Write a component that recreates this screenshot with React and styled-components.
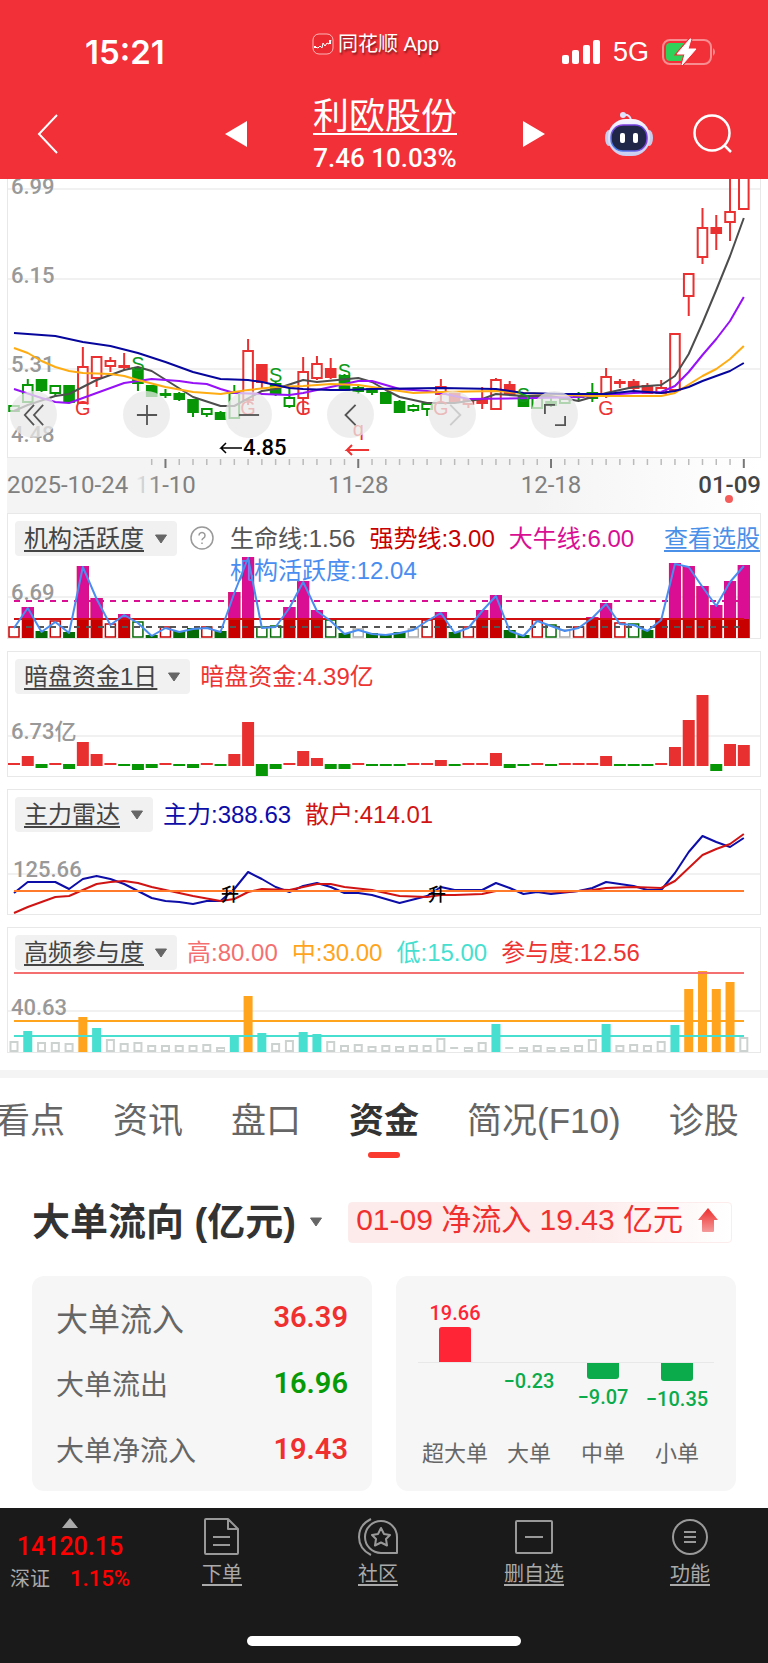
import React from 'react';
import styled, { createGlobalStyle } from 'styled-components';

const STEP = 13.77;
const xAt = (i) => 7 + STEP * i;

// [kind, high, top, bottom, low], upper case kind = filled body
const candles = [
    ['g', 227, 227, 232, 232], ['g', 200, 206, 223, 223], ['G', 200, 201, 211, 213], ['g', 206, 207, 214, 218],
    ['G', 207, 207, 223, 223], ['r', 168, 188, 224, 224], ['r', 178, 178, 199, 208], ['r', 178, 182, 187, 193],
    ['R', 174, 187, 188, 191], ['G', 188, 190, 204, 212], ['G', 207, 207, 217, 217], ['G', 210, 215, 216, 219],
    ['G', 213, 215, 220, 222], ['G', 221, 221, 233, 238], ['g', 230, 230, 235, 238], ['G', 232, 234, 240, 240],
    ['g', 206, 214, 239, 239], ['r', 160, 172, 221, 226], ['R', 186, 186, 203, 209], ['G', 203, 205, 215, 217],
    ['g', 208, 219, 227, 229], ['r', 178, 193, 219, 236], ['r', 177, 185, 199, 201], ['R', 179, 190, 198, 200],
    ['G', 195, 197, 211, 211], ['G', 207, 209, 212, 215], ['G', 210, 210, 213, 216], ['G', 214, 214, 224, 224],
    ['G', 221, 223, 233, 233], ['g', 225, 227, 231, 233], ['g', 225, 225, 230, 237], ['r', 200, 208, 215, 224],
    ['R', 215, 215, 223, 223], ['r', 221, 221, 225, 229], ['R', 208, 221, 224, 230], ['r', 199, 201, 230, 230],
    ['R', 202, 206, 215, 215], ['G', 218, 218, 227, 227], ['g', 218, 218, 229, 229], ['G', 219, 223, 226, 228],
    ['g', 220, 220, 224, 224], ['G', 213, 216, 218, 221], ['G', 204, 214, 219, 223], ['r', 189, 198, 215, 219],
    ['R', 200, 203, 204, 209], ['R', 200, 203, 209, 212], ['R', 204, 207, 214, 214], ['r', 201, 209, 214, 214],
    ['r', 155, 155, 211, 211], ['r', 95, 95, 117, 137], ['r', 29, 49, 78, 85], ['R', 36, 49, 54, 71],
    ['r', -12, 33, 43, 62], ['r', -12, -12, 30, 30],
];

// moving averages, [index, y] pairs
const averages = [
    { color: '#4d4d4d', points: [[0, 232], [1, 226], [3, 217], [4, 215], [6, 201], [8, 191], [9, 188], [10, 192], [13, 218], [15, 227], [16, 227], [18, 212], [19, 210], [21, 201], [22, 203], [25, 199], [26, 203], [27, 211], [28, 218], [30, 224], [32, 224], [34, 220], [35, 215], [37, 217], [39, 217], [41, 222], [43, 214], [45, 208], [47, 206], [48, 197], [49, 175], [50, 144], [51, 111], [52, 77], [53, 39]] },
    { color: '#9610f8', points: [[0, 210], [2, 219], [3, 223], [4, 224], [6, 214], [8, 204], [9, 202], [10, 200], [11, 201], [12, 202], [13, 204], [14, 205], [15, 210], [16, 214], [18, 215], [20, 216], [21, 214], [23, 208], [25, 202], [26, 202], [28, 210], [30, 212], [31, 214], [33, 220], [38, 219], [41, 218], [43, 216], [45, 214], [47, 213], [48, 207], [49, 193], [50, 176], [51, 160], [52, 142], [53, 118]] },
    { color: '#ffac12', points: [[0, 169], [1, 174], [2, 182], [3, 188], [4, 192], [5, 194], [7, 195], [8, 197], [9, 201], [11, 208], [13, 213], [15, 215], [17, 211], [19, 208], [21, 207], [23, 205], [25, 206], [27, 210], [29, 214], [31, 213], [35, 212], [37, 214], [42, 217], [47, 217], [48, 214], [50, 197], [51, 190], [52, 180], [53, 167]] },
    { color: '#06069c', points: [[0, 154], [1, 155], [3, 157], [5, 163], [7, 167], [9, 174], [11, 183], [13, 193], [15, 200], [17, 201], [18, 203], [19, 206], [20, 209], [21, 210], [23, 211], [24, 211], [26, 210], [31, 209], [35, 210], [37, 214], [40, 215], [43, 215], [45, 212], [47, 214], [48, 212], [49, 208], [50, 202], [51, 197], [52, 192], [53, 184]] },
];

// [mark, index, baseline]
const signals = [
    ['S', 9, 192], ['S', 19, 203], ['S', 24, 199], ['S', 37, 223],
    ['G', 5, 236], ['G', 17, 236], ['G', 21, 236], ['G', 31, 236], ['G', 43, 236], ['q', 25, 257],
];

const activity = [
    ['r', 11], ['M', 31], ['G', 7], ['r', 17], ['G', 6], ['M', 72], ['M', 40], ['r', 14], ['M', 24],
    ['g', 16], ['G', 3], ['r', 11], ['G', 7], ['G', 10], ['r', 11], ['G', 7], ['M', 46], ['M', 81],
    ['g', 11], ['g', 12], ['M', 31], ['M', 57], ['M', 28], ['g', 18], ['G', 5], ['n', 9], ['G', 5],
    ['G', 4], ['G', 6], ['n', 9], ['r', 18], ['M', 26], ['G', 6], ['r', 11], ['M', 28], ['M', 43],
    ['G', 8], ['G', 3], ['r', 18], ['g', 13], ['n', 8], ['r', 11], ['M', 21], ['M', 35], ['r', 15],
    ['g', 14], ['G', 8], ['M', 19], ['M', 75], ['M', 72], ['M', 52], ['M', 33], ['M', 57], ['M', 73],
];

const darkPool = [
    2, 10, -4, 3, -5, 24, 12, 2, -1, -6, -4, 2, -1, -4, 2, -1, 12, 44, -12, -5, 3, 15, 8, -5, -5, 2, -1,
    -1, -1, 2, 2, 6, -1, 2, 2, 13, -4, -1, 3, -1, 2, 2, 3, 10, -1, -1, -1, 3, 19, 46, 71, -7, 22, 21,
];

const mainForce = [[0, 104], [1, 93], [3, 93], [4, 100], [5, 90], [6, 87], [7, 90], [8, 95], [9, 102], [10, 109], [11, 112], [12, 113], [13, 115], [14, 112], [15, 112], [16, 100], [17, 83], [18, 90], [19, 98], [20, 103], [21, 97], [22, 94], [23, 98], [24, 104], [25, 104], [26, 106], [27, 110], [28, 114], [30, 107], [31, 98], [32, 101], [34, 101], [35, 94], [36, 99], [37, 105], [38, 103], [39, 105], [41, 102], [42, 99], [43, 93], [44, 95], [45, 97], [46, 101], [47, 101], [48, 84], [49, 63], [50, 47], [51, 53], [52, 58], [53, 49]];
const retail = [[0, 124], [1, 118], [2, 113], [3, 108], [4, 107], [5, 101], [6, 95], [7, 93], [8, 92], [9, 94], [10, 98], [12, 104], [13, 107], [15, 112], [16, 110], [17, 103], [18, 100], [20, 101], [22, 95], [23, 95], [24, 98], [26, 101], [27, 104], [28, 107], [30, 108], [31, 106], [32, 106], [34, 105], [35, 102], [38, 102], [40, 103], [42, 101], [43, 99], [45, 98], [47, 99], [48, 92], [49, 79], [50, 66], [51, 60], [52, 55], [53, 45]];

const participation = [
    10, 21, 9, 9, 8, 35, 24, 12, 8, 9, 6, 6, 6, 6, 7, 4, 17, 56, 19, 8, 11, 20, 18, 10, 6, 7, 5,
    6, 5, 6, 6, 13, 2, 4, 9, 28, 2, 4, 6, 4, 4, 6, 12, 28, 6, 7, 6, 10, 27, 63, 81, 63, 70, 14,
];

const tabs = ['看点', '资讯', '盘口', '资金', '简况(F10)', '诊股'];

const orders = [
    { label: '大单流入', value: '36.39', color: '#f02f2f', large: true },
    { label: '大单流出', value: '16.96', color: '#069a06' },
    { label: '大单净流入', value: '19.43', color: '#f02f2f' },
];

const flows = [
    { name: '超大单', value: 19.66 },
    { name: '大单', value: -0.23 },
    { name: '中单', value: -9.07 },
    { name: '小单', value: -10.35 },
];

const toLine = (points) => points.map(([i, y]) => `${xAt(i)},${y}`).join(' ');

function Caret() {
    return (
        <svg width="14" height="10" viewBox="0 0 14 10" aria-hidden="true">
            <path d="M1.5 1h11L7 9z" fill="#666" stroke="#666" strokeLinejoin="round" />
        </svg>
    );
}

function StatusBar() {
    return (
        <Status>
            <Clock>15:21</Clock>
            <AppMark>
                <svg width="22" height="22" viewBox="0 0 22 22" fill="none" stroke="#fff" aria-hidden="true">
                    <rect x="1" y="1" width="20" height="20" rx="6" fill="#ea2a30" strokeOpacity=".65" />
                    <path d="M3 14l3 1 2-2 2 2 1-5 2 3 2-3 2 1 2-4" />
                    <path d="M3 13v2M18 7v4" strokeWidth="2" />
                </svg>
                同花顺 App
            </AppMark>
            <Signals>
                <svg width="38" height="25" viewBox="0 0 38 25" fill="#fff" aria-hidden="true">
                    <rect y="15" width="7" height="9" rx="2" />
                    <rect x="10" y="10" width="7" height="14" rx="2" />
                    <rect x="21" y="5" width="7" height="19" rx="2" />
                    <rect x="31" width="7" height="24" rx="2" />
                </svg>
                5G
                <svg width="54" height="28" viewBox="0 0 54 28" aria-hidden="true">
                    <rect x="1" y="2" width="48" height="24" rx="7" fill="none" stroke="#fff" strokeOpacity=".45" strokeWidth="2" />
                    <path d="M51 10a5 5 0 0 1 0 8z" fill="#fff" fillOpacity=".45" />
                    <path d="M8 5h16v18H8a4 4 0 0 1-4-4V9a4 4 0 0 1 4-4z" fill="#30d158" />
                    <path d="M28 1L15 16h8l-3 11 14-16h-8l3-10z" fill="#fff" stroke="#f23038" strokeWidth="3" />
                    <path d="M28 1L15 16h8l-3 11 14-16h-8l3-10z" fill="#fff" stroke="#fff" strokeLinejoin="round" />
                </svg>
            </Signals>
        </Status>
    );
}

function StockNav() {
    return (
        <Nav>
            <IconButton aria-label="返回">
                <svg width="22" height="42" viewBox="0 0 22 42" fill="none" stroke="#fff" strokeWidth="2">
                    <path d="M20 2L2 21l18 19" />
                </svg>
            </IconButton>
            <Stepper>
                <IconButton aria-label="上一只">
                    <svg width="22" height="26" viewBox="0 0 22 26" fill="#fff"><path d="M0 13L22 0v26z" /></svg>
                </IconButton>
                <Stock>
                    <StockName href="#stock">利欧股份</StockName>
                    <Quote>7.46 10.03%</Quote>
                </Stock>
                <IconButton aria-label="下一只">
                    <svg width="22" height="26" viewBox="0 0 22 26" fill="#fff"><path d="M22 13L0 0v26z" /></svg>
                </IconButton>
            </Stepper>
            <NavTools>
                <IconButton aria-label="助手">
                    <svg width="48" height="44" viewBox="0 0 48 44">
                        <defs>
                            <linearGradient id="shell" x1="0" y1="0" x2="0" y2="1">
                                <stop offset="0" stopColor="#f6f4ff" />
                                <stop offset="1" stopColor="#c9cdf0" />
                            </linearGradient>
                            <linearGradient id="rim" x1="0" y1="1" x2="1" y2="0">
                                <stop offset="0" stopColor="#3d8bf0" />
                                <stop offset=".6" stopColor="#8a3fe0" />
                                <stop offset="1" stopColor="#5b3fd8" />
                            </linearGradient>
                        </defs>
                        <path d="M18 3c5-1 7 1 8 5" fill="none" stroke="#e4e0f8" strokeWidth="2" />
                        <circle cx="18" cy="3" r="3" fill="#dfe3fb" />
                        <ellipse cx="4" cy="26" rx="4" ry="8" fill="#c8cbe9" />
                        <ellipse cx="44" cy="26" rx="4" ry="8" fill="#c8cbe9" />
                        <rect x="3" y="7" width="42" height="37" rx="18" fill="url(#shell)" />
                        <rect x="6" y="13" width="36" height="26" rx="12" fill="#1f2648" stroke="url(#rim)" strokeWidth="1.5" />
                        <rect x="15" y="21" width="5" height="10" rx="2" fill="#fff" />
                        <rect x="28" y="21" width="5" height="10" rx="2" fill="#fff" />
                    </svg>
                </IconButton>
                <IconButton aria-label="搜索">
                    <svg width="40" height="40" viewBox="0 0 40 40" fill="none" stroke="#fff" strokeWidth="2.5">
                        <circle cx="19" cy="19" r="17.5" />
                        <path d="M31 31l7 7" />
                    </svg>
                </IconButton>
            </NavTools>
        </Nav>
    );
}

function Candle({ data, i }) {
    const [kind, high, top, bottom, low] = data;
    const color = kind.toLowerCase() === 'r' ? '#ea3030' : '#069606';
    const filled = kind !== kind.toLowerCase();
    const x = xAt(i);
    return (
        <g stroke={color} strokeWidth="2">
            <path d={`M${x} ${high}V${top}M${x} ${bottom}V${low}`} />
            <rect x={x - 4.8} y={top} width="9.6" height={bottom - top} fill={filled ? color : '#fff'} />
        </g>
    );
}

function KLine() {
    return (
        <KFrame>
            <Plot viewBox="1 0 752 278">
                {[10, 100, 190].map((y) => <GridLine key={y} x1="0" x2="754" y1={y} y2={y} />)}
                <AxisLabel x="4" y="15">6.99</AxisLabel>
                <AxisLabel x="4" y="104">6.15</AxisLabel>
                <AxisLabel x="4" y="193">5.31</AxisLabel>
                <AxisLabel x="4" y="263">4.48</AxisLabel>
                {candles.map((c, i) => <Candle key={i} data={c} i={i} />)}
                {averages.map((a) => <Line key={a.color} points={toLine(a.points)} stroke={a.color} />)}
                {signals.map(([mark, i, y]) => (
                    <SignalText key={mark + i} x={xAt(i)} y={y} fill={mark === 'S' ? '#0f9a1a' : '#ee3333'}>{mark}</SignalText>
                ))}
                <path d="M235 269h-21l5-5M214 269l5 5" fill="none" stroke="#000" strokeWidth="1.5" />
                <LowText x="236" y="276">4.85</LowText>
                <path d="M362 271h-22l5-5M340 271l5 5" fill="none" stroke="#ee3333" strokeWidth="2" />
            </Plot>
            <ChartTools>
                <RoundButton $first aria-label="最早"><svg viewBox="0 0 24 24"><path d="M12 1L2 12l10 11M22 1L12 12l10 11" /></svg></RoundButton>
                <RoundButton aria-label="放大"><svg viewBox="0 0 24 24"><path d="M1 12h22M12 1v22" /></svg></RoundButton>
                <RoundButton aria-label="缩小"><svg viewBox="0 0 24 24"><path d="M1 12h22" /></svg></RoundButton>
                <RoundButton aria-label="左移"><svg viewBox="0 0 24 24"><path d="M17 1L6 12l11 11" /></svg></RoundButton>
                <RoundButton $dim aria-label="右移"><svg viewBox="0 0 24 24"><path d="M9 1l11 11L9 23" /></svg></RoundButton>
                <RoundButton aria-label="全屏"><svg viewBox="0 0 24 24"><path d="M1 11V1h11M23 13v10H12" /></svg></RoundButton>
            </ChartTools>
        </KFrame>
    );
}

function DateAxis() {
    const ticks = candles.map((_, i) => i).filter((i) => i >= 10);
    const isMajor = (i) => [11, 25, 39, 53].includes(i);
    return (
        <Axis>
            <Plot viewBox="0 0 754 55">
                <defs>
                    <linearGradient id="fade">
                        <stop offset="0" stopColor="#f4f4f4" />
                        <stop offset=".85" stopColor="#f4f4f4" />
                        <stop offset="1" stopColor="#f4f4f4" stopOpacity="0" />
                    </linearGradient>
                </defs>
                {ticks.map((i) => (
                    <path key={i} d={`M${xAt(i)} 1v${isMajor(i) ? 9 : 6}`} stroke={isMajor(i) ? '#777' : '#bbb'} strokeWidth={isMajor(i) ? 2 : 1.5} />
                ))}
                <DateText x={xAt(11)} y="35" $middle>11-10</DateText>
                <rect x="0" y="14" width="152" height="40" fill="url(#fade)" />
                <DateText x="0" y="35">2025-10-24</DateText>
                <DateText x={xAt(25)} y="35" $middle>11-28</DateText>
                <DateText x={xAt(39)} y="35" $middle>12-18</DateText>
                <DateText x="754" y="35" $end>01-09</DateText>
                <circle cx="722" cy="41" r="4" fill="#f45c5c" />
            </Plot>
        </Axis>
    );
}

const activityColors = { r: '#c80000', M: '#c80000', g: '#066a06', G: '#066a06', n: '#aaa' };

function ActivityPlot() {
    return (
        <Plot viewBox="1 1 752 124">
            <GridLine x1="0" x2="754" y1="84" y2="84" />
            <AxisLabel x="4" y="87">6.69</AxisLabel>
            {activity.map(([kind, h], i) => {
                const x = xAt(i) - 6;
                if ('rgn'.includes(kind)) {
                    return <rect key={i} x={x + 1} y={125 - h} width="10" height={h - 1} fill="#fff" stroke={activityColors[kind]} strokeWidth="1.5" />;
                }
                return (
                    <g key={i}>
                        <rect x={x} y={125 - h} width="12" height={h} fill={activityColors[kind]} />
                        {kind === 'M' && h > 19 && <rect x={x} y={125 - h} width="12" height={h - 19} fill="#d90e93" />}
                    </g>
                );
            })}
            <path d="M7 88H737" stroke="#d90e93" strokeWidth="2" strokeDasharray="6 6" />
            <path d="M7 106H737" stroke="#d01010" strokeWidth="2" />
            <path d="M7 114H737" stroke="#555" strokeWidth="2" strokeDasharray="6 6" />
            <Line points={activity.map(([, h], i) => `${xAt(i)},${126 - h}`).join(' ')} stroke="#4a8df0" />
        </Plot>
    );
}

function DarkPoolPlot() {
    return (
        <Plot viewBox="1 1 752 124">
            <GridLine x1="0" x2="754" y1="85" y2="85" />
            <AxisLabel x="4" y="88">6.73亿</AxisLabel>
            {darkPool.map((v, i) => (
                <rect
                    key={i}
                    x={xAt(i) - 6}
                    y={v > 0 ? 115 - Math.max(v, 3) : 113}
                    width="12"
                    height={Math.abs(v) < 4 ? 2 : Math.abs(v)}
                    fill={v > 0 ? '#e83030' : '#069606'}
                />
            ))}
        </Plot>
    );
}

function RadarPlot() {
    return (
        <Plot viewBox="1 1 752 124">
            <GridLine x1="0" x2="754" y1="85" y2="85" />
            <AxisLabel x="6" y="88">125.66</AxisLabel>
            <Line points={toLine(mainForce)} stroke="#0d0da8" />
            <Line points={toLine(retail)} stroke="#d01414" />
            <path d="M7 102H737" stroke="#ff7a2a" strokeWidth="2" />
            <RiseText x="223" y="112">升</RiseText>
            <RiseText x="430" y="112">升</RiseText>
        </Plot>
    );
}

function ParticipationPlot() {
    return (
        <Plot viewBox="1 1 752 124">
            <GridLine x1="0" x2="754" y1="84" y2="84" />
            <AxisLabel x="4" y="88">40.63</AxisLabel>
            {participation.map((h, i) => {
                const x = xAt(i) - 4.5;
                if (h > 30) return <rect key={i} x={x} y={125 - h} width="9" height={h} fill="#ffa41c" />;
                if (h > 16) return <rect key={i} x={x} y={125 - h} width="9" height={h} fill="#46dfd0" />;
                if (h < 3) return <rect key={i} x={x} y="120" width="8" height="2" fill="#ccd2cf" />;
                return <rect key={i} x={x + 1} y={125 - h} width="7" height={h - 1} fill="#fff" stroke="#ccd2cf" strokeWidth="2" />;
            })}
            <path d="M7 46H737" stroke="#f47070" strokeWidth="2" />
            <path d="M7 94H737" stroke="#ffa41c" strokeWidth="2" />
            <path d="M7 109H737" stroke="#46dfd0" strokeWidth="2" />
        </Plot>
    );
}

function Indicator({ name, help, values, link, children }) {
    return (
        <Panel>
            {children}
            <PanelHead>
                <Picker>
                    <u>{name}</u>
                    <Caret />
                </Picker>
                {help && (
                    <HelpButton aria-label="说明">
                        <svg width="24" height="24" viewBox="0 0 24 24" fill="none" stroke="#999" strokeWidth="1.5">
                            <circle cx="12" cy="12" r="11" />
                            <path d="M9 9.500a3 3 0 1 1 4.500 2.600c-1 .6-1.500 1-1.500 2.200M12 16.500v1.500" />
                        </svg>
                    </HelpButton>
                )}
                <Values>
                    {values.map(([text, color]) => <Value key={text} $color={color}>{text}</Value>)}
                </Values>
                {link && <PanelLink href="#pick">{link}</PanelLink>}
            </PanelHead>
        </Panel>
    );
}

function FlowChart() {
    return (
        <FlowCard>
            {flows.map(({ name, value }) => {
                const size = Math.round(Math.abs(value) * 1.78);
                return (
                    <FlowColumn key={name}>
                        <FlowUp>
                            {value > 0 && <FlowValue $up>{value}</FlowValue>}
                            {value > 0 && <FlowBar $up style={{ height: size }} />}
                        </FlowUp>
                        <FlowDown>
                            {value < 0 && <FlowBar style={{ height: size }} />}
                            {value < 0 && <FlowValue>{`−${Math.abs(value)}`}</FlowValue>}
                        </FlowDown>
                        <FlowName>{name}</FlowName>
                    </FlowColumn>
                );
            })}
        </FlowCard>
    );
}

function BottomBar() {
    return (
        <Bottom>
            <BottomRow>
                <IndexBox>
                    <svg width="18" height="12" viewBox="0 0 18 12" fill="#aaa" aria-hidden="true"><path d="M9 1l8 10H1z" /></svg>
                    <IndexValue>14120.15</IndexValue>
                    <IndexLine>深证 <IndexRate>1.15%</IndexRate></IndexLine>
                </IndexBox>
                <BottomLink href="#order">
                    <svg width="40" height="40" viewBox="0 0 40 40">
                        <path d="M4 2h22l10 10v24q0 1-1 1H4q-1 0-1-1V3q0-1 1-1zM26 2v10h10M11 20h17M11 28h17" />
                    </svg>
                    <span>下单</span>
                </BottomLink>
                <BottomLink href="#community">
                    <svg width="40" height="40" viewBox="0 0 40 40">
                        <path d="M13 2C-3 10-3 30 13 38" />
                        <path d="M39 36H23a16 16 0 1 1 16-16zM23 11l3 6 6 1-4 4 1 6.500-6-3-6 3 1-6.500-4-4 6-1z" />
                    </svg>
                    <span>社区</span>
                </BottomLink>
                <BottomLink href="#remove">
                    <svg width="40" height="40" viewBox="0 0 40 40">
                        <rect x="2" y="4" width="36" height="32" rx="1" />
                        <path d="M11 20h18" />
                    </svg>
                    <span>删自选</span>
                </BottomLink>
                <BottomLink href="#more">
                    <svg width="40" height="40" viewBox="0 0 40 40">
                        <circle cx="20" cy="20" r="17" />
                        <path d="M14 15h12M14 20h12M14 25h12" />
                    </svg>
                    <span>功能</span>
                </BottomLink>
            </BottomRow>
            <HomeIndicator />
        </Bottom>
    );
}

export default function App() {
    return (
        <Page>
            <GlobalStyle />
            <Header>
                <StatusBar />
                <StockNav />
            </Header>
            <Charts>
                <KLine />
                <DateAxis />
                <Indicator
                    name="机构活跃度"
                    help
                    link="查看选股"
                    values={[['生命线:1.56', '#555'], ['强势线:3.00', '#c80000'], ['大牛线:6.00', '#d90e93'], ['机构活跃度:12.04', '#4a8df0']]}
                >
                    <ActivityPlot />
                </Indicator>
                <Indicator name="暗盘资金1日" values={[['暗盘资金:4.39亿', '#ee3333']]}>
                    <DarkPoolPlot />
                </Indicator>
                <Indicator name="主力雷达" values={[['主力:388.63', '#0d0da8'], ['散户:414.01', '#d01414']]}>
                    <RadarPlot />
                </Indicator>
                <Indicator
                    name="高频参与度"
                    values={[['高:80.00', '#f47070'], ['中:30.00', '#ffa41c'], ['低:15.00', '#46dfd0'], ['参与度:12.56', '#ee3333']]}
                >
                    <ParticipationPlot />
                </Indicator>
            </Charts>
            <Tabs>
                {tabs.map((tab) => <Tab key={tab} href="#tab" $active={tab === '资金'}>{tab}</Tab>)}
            </Tabs>
            <FundHead>
                <FundTitle>大单流向 (亿元) <Caret /></FundTitle>
                <NetBadge>
                    01-09 净流入 19.43 亿元
                    <svg width="22" height="26" viewBox="0 0 22 26" aria-hidden="true">
                        <defs>
                            <linearGradient id="arrow" x1="0" y1="0" x2="0" y2="1">
                                <stop offset="0" stopColor="#ee2c2c" />
                                <stop offset="1" stopColor="#f59a9a" />
                            </linearGradient>
                        </defs>
                        <path d="M11 1l10 12h-4v11q0 1-1 1H6q-1 0-1-1V13H1z" fill="url(#arrow)" />
                    </svg>
                </NetBadge>
            </FundHead>
            <Cards>
                <OrderCard>
                    {orders.map((o) => (
                        <OrderRow key={o.label}>
                            <OrderLabel $large={o.large}>{o.label}</OrderLabel>
                            <OrderValue $color={o.color}>{o.value}</OrderValue>
                        </OrderRow>
                    ))}
                </OrderCard>
                <FlowChart />
            </Cards>
            <BottomBar />
        </Page>
    );
}

const textFont = '"Liberation Sans", "Noto Sans CJK SC", sans-serif';
const numberFont = 'Roboto, "Noto Sans CJK SC", sans-serif';

const GlobalStyle = createGlobalStyle`
    *, *::before, *::after {
        box-sizing: border-box;
    }
    body {
        margin: 0;
        background: #fff;
        font-family: ${textFont};
        overflow-x: hidden;
    }
    button {
        border: 0;
        padding: 0;
        background: none;
        font: inherit;
        color: inherit;
        cursor: pointer;
    }
    svg {
        display: block;
        flex: none;
    }
`;

const Page = styled.main`
    width: 100%;
    overflow: hidden;
`;

const Header = styled.header`
    background: #f23038;
    color: #fff;
    padding-top: 28px;
`;

const Status = styled.div`
    display: grid;
    grid-template-columns: 1fr auto 1fr;
    align-items: center;
    height: 48px;
    padding: 0 52px 0 85px;
`;

const Clock = styled.time`
    font-family: Inter, sans-serif;
    font-size: 33px;
    font-weight: 600;
`;

const AppMark = styled.div`
    display: flex;
    align-items: center;
    gap: 4px;
    padding-bottom: 16px;
    padding-right: 50px;
    font-size: 20px;
    line-height: 24px;
    text-shadow: 1px 2px 2px rgba(0, 0, 0, .5);
`;

const Signals = styled.div`
    display: flex;
    align-items: center;
    justify-content: flex-end;
    gap: 13px;
    font-size: 27px;
`;

const Nav = styled.nav`
    display: grid;
    grid-template-columns: 1fr 320px 1fr;
    align-items: center;
    height: 103px;
    padding: 13px 35px 0 37px;
`;

const IconButton = styled.button`
    display: flex;
    justify-self: start;
`;

const Stepper = styled.div`
    display: flex;
    align-items: center;
    justify-content: space-between;
`;

const Stock = styled.div`
    display: flex;
    flex-direction: column;
    align-items: center;
`;

const StockName = styled.a`
    color: #fff;
    font-size: 36px;
    line-height: 48px;
    text-underline-offset: 4px;
    text-decoration-thickness: 2px;
`;

const Quote = styled.div`
    font-family: ${numberFont};
    font-size: 26px;
    font-weight: 500;
    line-height: 34px;
`;

const NavTools = styled.div`
    display: flex;
    align-items: center;
    justify-content: flex-end;
    gap: 40px;
`;

const Charts = styled.section`
    padding: 0 7px 5px;
`;

const KFrame = styled.div`
    position: relative;
    border: solid #e8e8e8;
    border-width: 0 1px 1px;
`;

const Plot = styled.svg`
    width: 100%;
    height: auto;
    grid-area: 1 / 1;
`;

const GridLine = styled.line`
    stroke: #ececec;
    stroke-width: 1.5;
`;

const Line = styled.polyline`
    fill: none;
    stroke-width: 2;
    stroke-linejoin: round;
`;

const AxisLabel = styled.text`
    font-family: ${numberFont};
    font-size: 22px;
    font-weight: 500;
    fill: #999;
`;

const SignalText = styled.text`
    font-size: 20px;
    text-anchor: middle;
`;

const LowText = styled.text`
    font-family: ${numberFont};
    font-size: 22px;
    font-weight: 500;
`;

const RiseText = styled.text`
    font-size: 18px;
    font-weight: 500;
    text-anchor: middle;
`;

// floats over the lower edge of the candles
const ChartTools = styled.div`
    position: absolute;
    left: 2px;
    bottom: 19px;
    display: flex;
    gap: 55px;
`;

const RoundButton = styled.button`
    display: grid;
    place-items: center;
    width: 47px;
    height: 47px;
    margin-right: ${(p) => (p.$first ? '11px' : '0')};
    border-radius: 50%;
    background: rgba(232, 232, 232, .75);
    svg {
        width: 22px;
        fill: none;
        stroke: ${(p) => (p.$dim ? '#ccc' : '#555')};
        stroke-width: 2;
    }
`;

const Axis = styled.div`
    background: linear-gradient(to right, #f4f4f4 70%, #fff);
`;

const DateText = styled.text`
    font-family: ${numberFont};
    font-size: 24px;
    font-weight: ${(p) => (p.$end ? 500 : 400)};
    fill: ${(p) => (p.$end ? '#444' : '#808080')};
    text-anchor: ${(p) => (p.$end ? 'end' : p.$middle ? 'middle' : 'start')};
`;

const Panel = styled.div`
    display: grid;
    margin-bottom: 12px;
    border: 1px solid #e8e8e8;
`;

const PanelHead = styled.div`
    grid-area: 1 / 1;
    display: flex;
    align-items: flex-start;
    padding: 7px 0 0 7px;
    font-size: 24px;
    line-height: 35px;
`;

const Picker = styled.button`
    display: flex;
    align-items: center;
    gap: 10px;
    height: 35px;
    padding: 0 9px;
    border-radius: 4px;
    background: #f1f1f1;
    color: #444;
    white-space: nowrap;
    u {
        text-underline-offset: 3px;
        text-decoration-thickness: 2px;
    }
`;

const HelpButton = styled.button`
    margin: 5px 6px 0 13px;
`;

const Values = styled.div`
    display: flex;
    flex-wrap: wrap;
    flex: 1;
    column-gap: 14px;
    margin-left: 10px;
    line-height: 32px;
    padding-top: 2px;
`;

const Value = styled.span`
    color: ${(p) => p.$color};
`;

const PanelLink = styled.a`
    color: #4a90e8;
    text-underline-offset: 3px;
    text-decoration-thickness: 2px;
`;

const Tabs = styled.nav`
    display: flex;
    gap: 48px;
    height: 104px;
    padding-top: 15px;
    border-top: 8px solid #f4f4f4;
    text-indent: 0;
    margin-left: -5px;
    font-size: 35px;
    white-space: nowrap;
`;

const Tab = styled.a`
    display: flex;
    flex-direction: column;
    align-items: center;
    color: ${(p) => (p.$active ? '#333' : '#666')};
    font-weight: ${(p) => (p.$active ? 700 : 400)};
    line-height: 56px;
    text-decoration: none;
    &::after {
        content: '';
        width: 32px;
        height: 6px;
        margin-top: 3px;
        border-radius: 3px;
        background: ${(p) => (p.$active ? '#fa3a2f' : 'transparent')};
    }
`;

const FundHead = styled.div`
    display: flex;
    align-items: center;
    justify-content: space-between;
    padding: 20px 36px 0 32px;
`;

const FundTitle = styled.button`
    display: flex;
    align-items: center;
    gap: 13px;
    font-size: 38px;
    font-weight: 700;
    line-height: 56px;
    color: #333;
`;

const NetBadge = styled.div`
    display: flex;
    align-items: center;
    gap: 14px;
    height: 41px;
    padding: 0 12px 0 7px;
    border: 1px solid #fdecec;
    border-radius: 4px;
    background: linear-gradient(to right, #fdeaea 60%, #fff);
    color: #f02f2f;
    font-size: 30px;
    line-height: 36px;
    padding-bottom: 4px;
    white-space: nowrap;
`;

const Cards = styled.div`
    display: grid;
    grid-template-columns: 1fr 1fr;
    gap: 24px;
    padding: 26px 32px 17px;
`;

const OrderCard = styled.div`
    display: flex;
    flex-direction: column;
    gap: 22px;
    padding: 19px 24px 20px;
    border-radius: 12px;
    background: #f6f6f6;
`;

const OrderRow = styled.div`
    display: flex;
    align-items: center;
    justify-content: space-between;
    height: 44px;
`;

const OrderLabel = styled.span`
    font-size: ${(p) => (p.$large ? '32px' : '28px')};
    color: #666;
`;

const OrderValue = styled.span`
    font-family: ${numberFont};
    font-size: 29px;
    font-weight: 600;
    color: ${(p) => p.$color};
`;

const FlowCard = styled.div`
    display: grid;
    grid-template-columns: repeat(4, 1fr);
    padding: 0 22px;
    border-radius: 12px;
    background: #f6f6f6;
`;

const FlowColumn = styled.div`
    display: flex;
    flex-direction: column;
`;

const FlowUp = styled.div`
    display: flex;
    flex-direction: column;
    align-items: center;
    justify-content: flex-end;
    height: 87px;
    border-bottom: 1px solid #e8e8e8;
`;

const FlowDown = styled.div`
    display: flex;
    flex-direction: column;
    align-items: center;
    height: 73px;
`;

const FlowBar = styled.div`
    width: 32px;
    background: ${(p) => (p.$up ? '#ff2436' : '#0bab4b')};
    border-radius: ${(p) => (p.$up ? '3px 3px 0 0' : '0 0 3px 3px')};
`;

const FlowValue = styled.span`
    font-family: ${numberFont};
    font-size: 20px;
    font-weight: 500;
    line-height: 28px;
    padding-top: ${(p) => (p.$up ? '0' : '4px')};
    color: ${(p) => (p.$up ? '#ff2436' : '#0bab4b')};
`;

const FlowName = styled.span`
    font-size: 22px;
    line-height: 36px;
    text-align: center;
    color: #666;
    white-space: nowrap;
`;

const Bottom = styled.footer`
    padding-bottom: 17px;
    background: #1a1a1a;
    color: #aaa;
`;

const BottomRow = styled.div`
    display: flex;
    height: 128px;
    padding-top: 9px;
`;

const IndexBox = styled.div`
    display: flex;
    flex-direction: column;
    align-items: center;
    width: 144px;
    padding-right: 4px;
`;

const IndexValue = styled.span`
    font-family: ${numberFont};
    font-size: 25px;
    font-weight: 500;
    line-height: 36px;
    color: #f00;
`;

const IndexLine = styled.span`
    display: flex;
    gap: 20px;
    font-size: 20px;
    line-height: 28px;
`;

const IndexRate = styled.span`
    font-family: ${numberFont};
    font-size: 22px;
    font-weight: 500;
    color: #f00;
`;

const BottomLink = styled.a`
    flex: 1;
    display: flex;
    flex-direction: column;
    align-items: center;
    gap: 3px;
    color: #aaa;
    font-size: 20px;
    line-height: 28px;
    text-underline-offset: 3px;
    text-decoration-thickness: 2px;
    svg {
        fill: none;
        stroke: #999;
        stroke-width: 2;
        stroke-linejoin: round;
    }
`;

const HomeIndicator = styled.div`
    width: 274px;
    height: 10px;
    margin: 0 auto;
    border-radius: 5px;
    background: #fff;
`;
